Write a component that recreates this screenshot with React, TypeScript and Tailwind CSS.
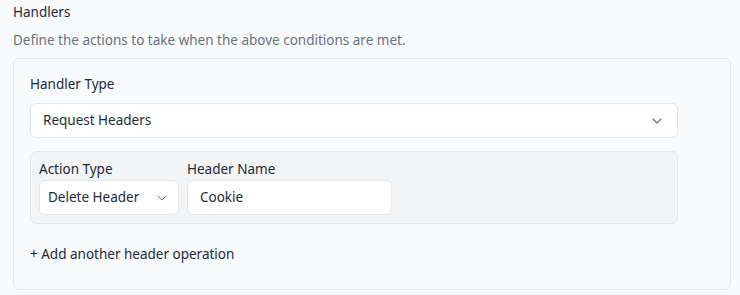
import { ChevronDown } from "lucide-react";

function Label({ children }: { children: React.ReactNode }) {
  return <div className="text-[13.5px] leading-5 text-gray-800">{children}</div>;
}

export default function App() {
  return (
    <div
      className="h-[295px] w-[740px] bg-[#f9fafb] px-[13px] pt-[2px] text-gray-800"
      style={{ fontFamily: '"Noto Sans", sans-serif' }}
    >
      <div className="text-[13.5px] leading-5">Handlers</div>
      <p className="mt-[8px] text-[13.5px] leading-5 text-gray-500">
        Define the actions to take when the above conditions are met.
      </p>

      <div className="mt-[8px] w-[718px] rounded-md border border-gray-200 bg-[#f9fafb] px-4 pb-[25px] pt-[15px]">
        <Label>Handler Type</Label>
        <button className="mt-[9px] flex h-[35px] w-[648px] items-center justify-between rounded-md border border-gray-200 bg-white px-3 text-[13.5px]">
          <span>Request Headers</span>
          <ChevronDown className="h-4 w-4 text-gray-500" strokeWidth={1.75} />
        </button>

        <div className="mt-[13px] w-[648px] rounded-md border border-gray-200 bg-gray-100 px-2 pb-2 pt-[7px]">
          <div className="flex gap-2">
            <div>
              <Label>Action Type</Label>
              <button className="mt-[1px] flex h-[35px] w-[140px] items-center justify-between rounded-md border border-gray-200 bg-white px-2 text-[13.5px]">
                <span>Delete Header</span>
                <ChevronDown className="h-4 w-4 text-gray-500" strokeWidth={1.5} />
              </button>
            </div>
            <div>
              <Label>Header Name</Label>
              <div className="mt-[1px] flex h-[35px] w-[205px] items-center rounded-md border border-gray-200 bg-white px-3 text-[13.5px]">
                Cookie
              </div>
            </div>
          </div>
        </div>

        <div className="mt-[20px] text-[13.5px] leading-5">+ Add another header operation</div>
      </div>
    </div>
  );
}
